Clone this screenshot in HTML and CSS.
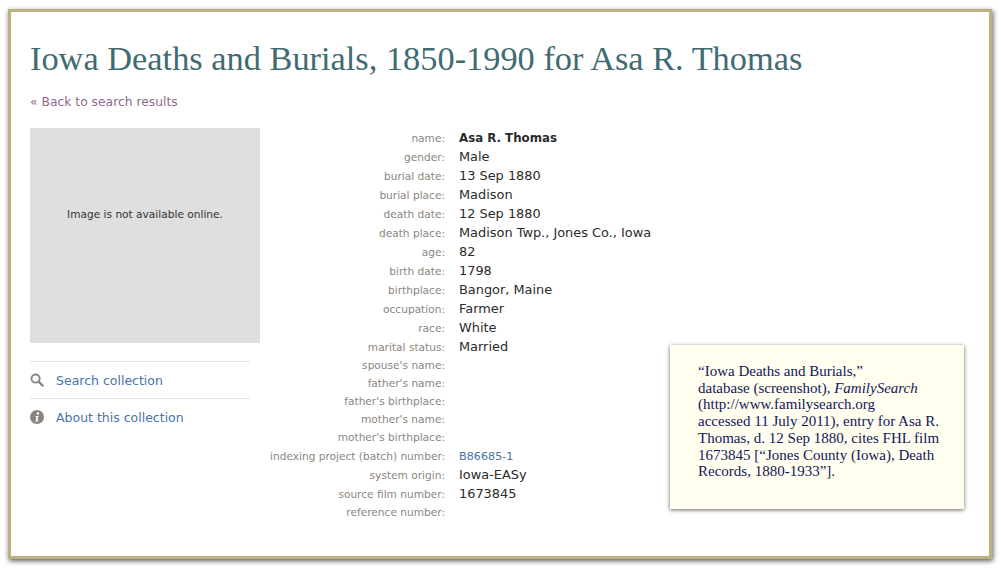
FILE: index.html
```html
<!DOCTYPE html>
<html>
<head>
<meta name="viewport" content="width=device-width, initial-scale=1.0">
<title>Iowa Deaths and Burials</title>
<link rel="stylesheet" href="styles.css">
</head>
<body>
<div class="frame">
  <h1>Iowa Deaths and Burials, 1850-1990 for Asa R. Thomas</h1>
  <a class="back" href="#">« Back to search results</a>
  <div class="columns">
    <div class="side">
      <div class="noimage">Image is not available online.</div>
      <ul class="links">
        <li>
          <svg class="icon" viewBox="0 0 14 14" width="14" height="14"><circle cx="5.6" cy="5.6" r="4.1" fill="none" stroke="#8a8580" stroke-width="1.8"/><path d="M8.6 8.6L12.6 12.6" stroke="#8a8580" stroke-width="2.2" stroke-linecap="round"/></svg>
          <a href="#">Search collection</a>
        </li>
        <li>
          <svg class="icon" viewBox="0 0 14 14" width="14" height="14"><circle cx="7" cy="7" r="7" fill="#8a8580"/><circle cx="7.9" cy="3.5" r="1.2" fill="#fff"/><path d="M5.6 6h2.9L7.4 10.4h1v1H5.4l1.1-4.4h-1z" fill="#fff"/></svg>
          <a href="#">About this collection</a>
        </li>
      </ul>
    </div>
    <dl class="record">
      <dt>name:</dt><dd class="strong">Asa R. Thomas</dd>
      <dt>gender:</dt><dd>Male</dd>
      <dt>burial date:</dt><dd>13 Sep 1880</dd>
      <dt>burial place:</dt><dd>Madison</dd>
      <dt>death date:</dt><dd>12 Sep 1880</dd>
      <dt>death place:</dt><dd>Madison Twp., Jones Co., Iowa</dd>
      <dt>age:</dt><dd>82</dd>
      <dt>birth date:</dt><dd>1798</dd>
      <dt>birthplace:</dt><dd>Bangor, Maine</dd>
      <dt>occupation:</dt><dd>Farmer</dd>
      <dt>race:</dt><dd>White</dd>
      <dt>marital status:</dt><dd>Married</dd>
      <dt>spouse's name:</dt><dd></dd>
      <dt>father's name:</dt><dd></dd>
      <dt>father's birthplace:</dt><dd></dd>
      <dt>mother's name:</dt><dd></dd>
      <dt>mother's birthplace:</dt><dd></dd>
      <dt>indexing project (batch) number:</dt><dd class="batch"><a href="#">B86685-1</a></dd>
      <dt>system origin:</dt><dd>Iowa-EASy</dd>
      <dt>source film number:</dt><dd>1673845</dd>
      <dt>reference number:</dt><dd></dd>
    </dl>
  </div>
  <div class="note">
    “Iowa Deaths and Burials,”<br>
    database (screenshot), <i>FamilySearch</i><br>
    (http://www.familysearch.org<br>
    accessed 11 July 2011), entry for Asa R.<br>
    Thomas, d. 12 Sep 1880, cites FHL film<br>
    1673845 [“Jones County (Iowa), Death<br>
    Records, 1880-1933”].
  </div>
</div>
</body>
</html>
```

FILE: styles.css
```css
* {box-sizing: border-box;}

html, body {
  height: 100%;
}

body {
  margin: 0;
  padding: 9px 9px 10px 8px;
  background: #fff;
  font-family: "DejaVu Sans", sans-serif;
  overflow: hidden;
}

.frame {
  position: relative;
  height: 550px;
  padding: 26px 19px 0 19px;
  background: #fff;
  border: 3px solid #bdb184;
  box-shadow: 1px 2px 5px rgba(0,0,0,0.65);
}

h1 {
  margin: 0;
  font-family: "Liberation Serif", serif;
  font-weight: normal;
  font-size: 34.36px;
  line-height: 40px;
  color: #3f6c72;
}

.back {
  display: block;
  margin-top: 15px;
  font-size: 12.33px;
  line-height: 18px;
  color: #8e6a90;
  text-decoration: none;
}

.columns {
  display: flex;
  margin-top: 17px;
}

.side {
  width: 230px;
  flex: none;
}

.noimage {
  display: flex;
  justify-content: center;
  padding-top: 79px;
  height: 215px;
  background: #dfdfdf;
  font-size: 10.6px;
  line-height: 14px;
  color: #333;
}

.links {
  margin: 18px 10px 0 0;
  padding: 0;
  list-style: none;
}

.links li {
  display: flex;
  align-items: center;
  gap: 12px;
  height: 37px;
  border-top: 1px solid #e4e4e4;
}

.links a {
  font-size: 12.5px;
  color: #4a72a8;
  text-decoration: none;
}

.icon {
  flex: none;
}

.record {
  display: grid;
  grid-template-columns: 175px 1fr;
  column-gap: 14px;
  margin: 0 0 0 10px;
  align-items: center;
}

.record dt {
  text-align: right;
  font-size: 10.6px;
  line-height: 18px;
  color: #8b8680;
  white-space: nowrap;
}

.record dd {
  margin: 0;
  font-size: 12.9px;
  line-height: 19px;
  color: #2b2b2b;
}

.record dd:empty {
  line-height: 18px;
}

.record dd.strong {
  height: 19px;
  line-height: 21px;
  font-size: 11.8px;
  font-weight: bold;
}

.record dd.batch {
  height: 19px;
  line-height: 21px;
  font-size: 11.2px;
}

.batch a {
  color: #4a72a8;
  text-decoration: none;
}

.note {
  position: absolute;
  left: 659px;
  top: 333px;
  width: 294px;
  height: 164px;
  padding: 18px 20px 0 28px;
  background: #fffeef;
  box-shadow: 0 1px 4px rgba(0,0,0,0.6);
  font-family: "Liberation Serif", serif;
  font-size: 15px;
  line-height: 16.7px;
  color: #14175a;
  white-space: nowrap;
}
```
